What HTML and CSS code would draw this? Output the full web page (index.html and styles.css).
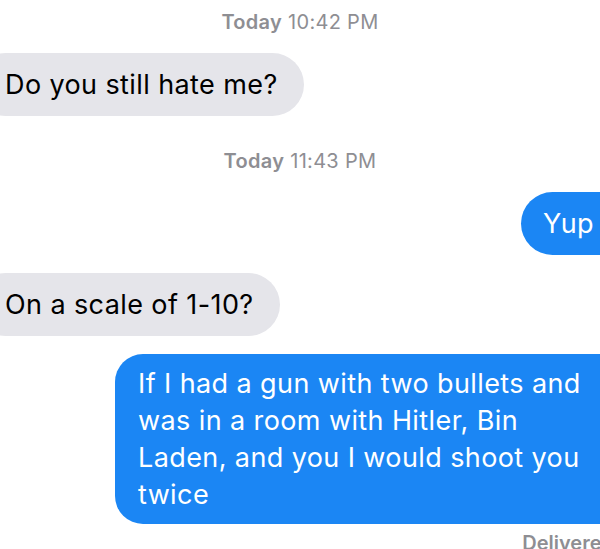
FILE: index.html
```html
<!DOCTYPE html>
<html lang="en">
<head>
    <meta charset="UTF-8" />
    <meta name="viewport" content="width=device-width, initial-scale=1.0" />
    <title>Messages</title>
    <link rel="stylesheet" href="styles.css">
</head>
<body>
<main class="thread">
    <p class="stamp"><b>Today</b> 10:42 PM</p>
    <div class="row them">
        <div class="bubble">Do you still hate me?</div>
    </div>

    <p class="stamp stamp-gap"><b>Today</b> 11:43 PM</p>
    <div class="row me">
        <div class="bubble">Yup</div>
    </div>
    <div class="row them">
        <div class="bubble">On a scale of 1-10?</div>
    </div>
    <div class="row me">
        <div class="bubble long">If I had a gun with two bullets and was in a room with Hitler, Bin Laden, and you I would shoot you twice</div>
    </div>
    <p class="status">Delivered</p>
</main>
</body>
</html>
```

FILE: styles.css
```css
body {
  margin: 0;
  background-color: #fff;
  font-family: Inter, "Noto Sans", sans-serif;
  overflow: hidden;
}

.thread {
  width: 600px;
  height: 549px;
  overflow: hidden;
  display: flex;
  flex-direction: column;
}

.stamp {
  margin: 9px 0 0;
  text-align: center;
  font-size: 20px;
  line-height: 26px;
  letter-spacing: 0.3px;
  color: #8e8e93;
}

.stamp b {
  font-weight: 600;
}

.stamp-gap {
  margin-top: 32px;
}

.row {
  display: flex;
  margin-top: 18px;
}

.stamp + .row {
  margin-top: 18px;
}

.row.them {
  justify-content: flex-start;
  margin-left: -26px;
}

.row.me {
  justify-content: flex-end;
  margin-right: -46px;
}

.bubble {
  font-size: 27px;
  line-height: 37px;
  letter-spacing: 0.4px;
  padding: 13px 26px 13px 31px;
  border-radius: 32px;
  background-color: #e5e5ea;
  color: #000;
}

.me .bubble {
  background-color: #1b86f4;
  color: #fff;
  padding: 13px 52px 13px 22px;
}

.me .bubble.long {
  width: 475px;
  border-radius: 28px;
  padding: 11px 28px 11px 23px;
  margin-right: 5px;
}

.status {
  margin: 7px -14px 0 0;
  text-align: right;
  font-size: 20px;
  font-weight: 600;
  color: #8e8e93;
}
```
